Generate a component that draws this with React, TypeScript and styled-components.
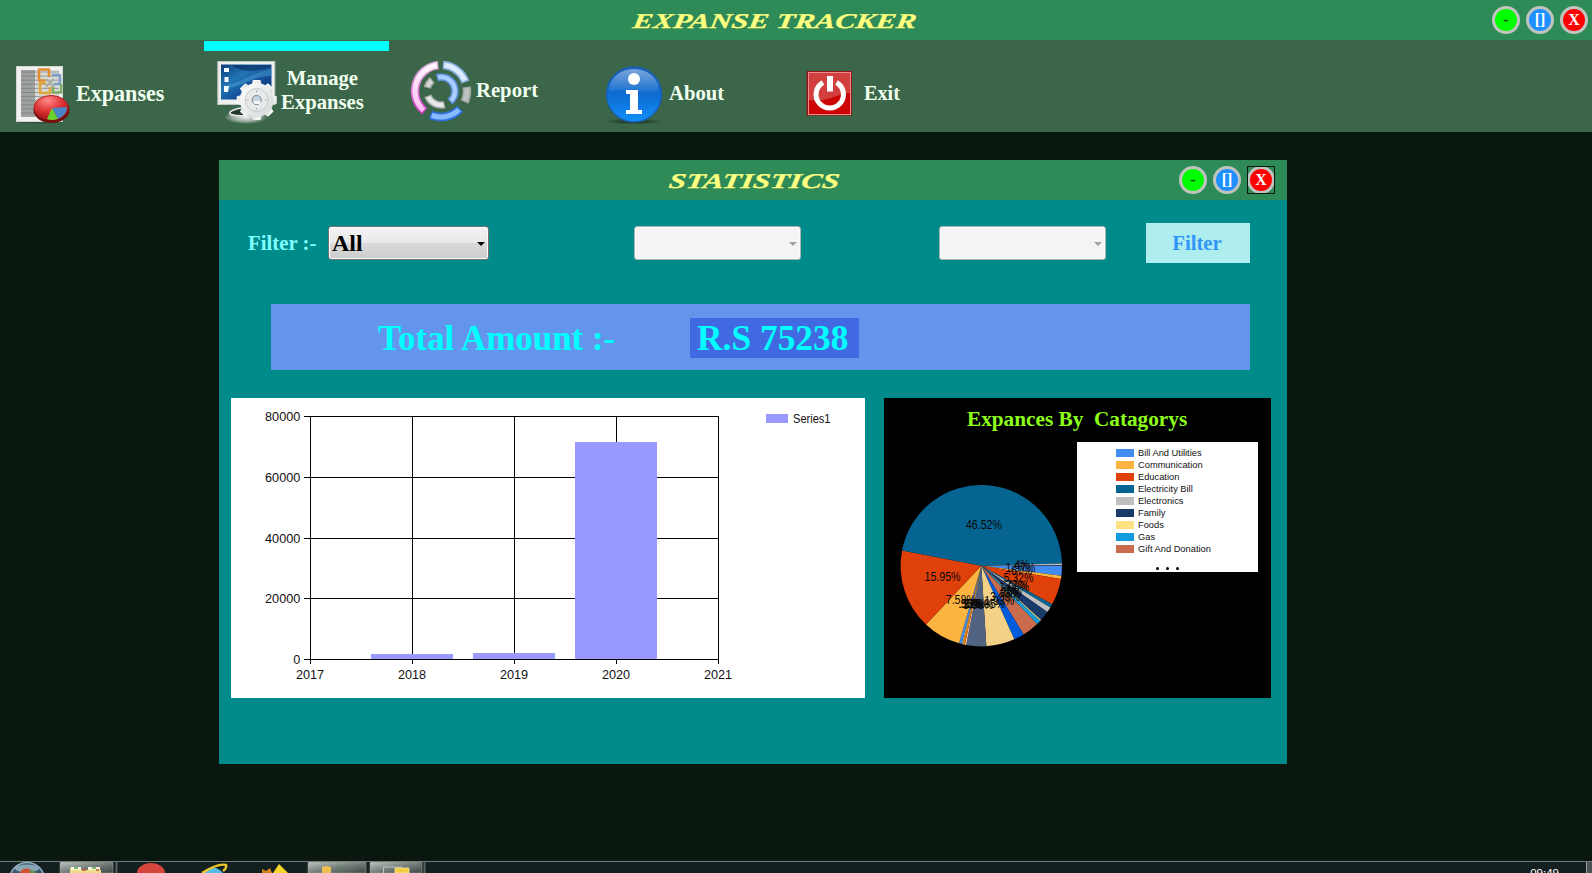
import React from 'react';
import styled, { createGlobalStyle } from 'styled-components';

const GlobalStyle = createGlobalStyle`
  * { box-sizing: border-box; }
  body { margin: 0; background: #08160f; font-family: "Liberation Serif", "Times New Roman", serif; }
`;

const Screen = styled.div`
  display: flex;
  flex-direction: column;
  width: 1592px;
  height: 873px;
  overflow: hidden;
  background: #0a170f;
`;

const TitleBar = styled.header<{ $inset: number }>`
  display: grid;
  grid-template-columns: 1fr auto;
  align-items: center;
  flex: none;
  height: 40px;
  padding-right: ${(p) => p.$inset}px;
  background: #2e8b57;
`;

const Title = styled.h1<{ $left: number; $stretch: number }>`
  margin: 2px 0 0;
  padding-left: ${(p) => p.$left}px;
  font-size: 21px;
  line-height: 38px;
  font-weight: bold;
  font-style: italic;
  white-space: nowrap;
  color: #ffff80;
  span {
    display: inline-block;
    transform: scaleX(${(p) => p.$stretch}) skewX(-6deg);
    transform-origin: left center;
    -webkit-text-stroke: 0.25px #ffff80;
  }
`;

const Controls = styled.div`
  display: flex;
  gap: 6px;
`;

const ControlFrame = styled.div<{ $focused?: boolean }>`
  width: 28px;
  height: 28px;
  outline: ${(p) => (p.$focused ? '1px solid #0b1a10' : 'none')};
  outline-offset: -1px;
`;

const Control = styled.button<{ $fill: string; $ink: string }>`
  display: block;
  width: 28px;
  height: 28px;
  padding: 0 0 1px;
  border: 3px solid #c0c4c0;
  border-radius: 50%;
  background: ${(p) => p.$fill};
  color: ${(p) => p.$ink};
  font: bold 16px/18px "Liberation Serif", serif;
`;

const Nav = styled.nav`
  display: grid;
  grid-template-columns: 204px 194px 194px 204px 1fr;
  flex: none;
  height: 92px;
  background: #3c6649;
`;

const NavItem = styled.a<{ $indent: number; $active?: boolean }>`
  display: flex;
  align-items: flex-start;
  padding: 9px 0 0 ${(p) => p.$indent}px;
  margin-top: 1px;
  border-top: 10px solid transparent;
  border-image: ${(p) =>
    p.$active ? 'linear-gradient(90deg, #00ffff 185px, transparent 185px) 10 0 0 0' : 'none'};
  svg { flex: none; }
`;

const NavLabel = styled.span<{ $top: number; $gap: number; $size: number }>`
  margin: ${(p) => p.$top}px 0 0 ${(p) => p.$gap}px;
  font-size: ${(p) => p.$size}px;
  line-height: 24px;
  font-weight: bold;
  text-align: center;
  white-space: pre;
  color: #f0fff0;
`;

const Desktop = styled.main`
  flex: 1;
  padding: 28px 0 0 219px;
`;

const Window = styled.section`
  width: 1068px;
  height: 604px;
  background: #008b8b;
`;

const FilterRow = styled.div`
  display: flex;
  align-items: center;
  height: 40px;
  margin-top: 23px;
  padding-left: 29px;
`;

const FilterLabel = styled.label`
  width: 80px;
  font-size: 20.8px;
  font-weight: bold;
  color: #7fffff;
`;

const Combo = styled.div<{ $width: number; $gap: number; $disabled?: boolean }>`
  display: flex;
  align-items: center;
  justify-content: space-between;
  width: ${(p) => p.$width}px;
  height: 34px;
  margin-right: ${(p) => p.$gap}px;
  padding: 0 3px 0 3px;
  border: 1px solid ${(p) => (p.$disabled ? '#a9b5b5' : '#6f7575')};
  border-radius: 3px;
  background: ${(p) =>
    p.$disabled ? '#f4f4f4' : 'linear-gradient(#f3f3f3 0%, #e9e9e9 48%, #dadada 50%, #cdcdcd 100%)'};
  box-shadow: inset 0 0 0 1px #fafafa;
  color: ${(p) => (p.$disabled ? '#a0a0a0' : '#000')};
  font-size: 24px;
  line-height: 32px;
  font-weight: bold;
  &::after {
    content: '';
    margin: 2px 0 0 auto;
    border: 4px solid transparent;
    border-top-color: currentColor;
    border-bottom: 0;
  }
`;

const FilterButton = styled.button`
  width: 104px;
  height: 40px;
  padding: 0 2px 0 0;
  border: 0;
  background: #afeeee;
  color: #3296f8;
  font: bold 20.8px/40px "Liberation Serif", serif;
`;

const TotalBar = styled.div`
  display: flex;
  align-items: center;
  width: 979px;
  height: 66px;
  margin: 41px 0 28px 52px;
  padding: 2px 0 0 107px;
  background: #6495ed;
  color: #00ffff;
  font-size: 34.9px;
  font-weight: bold;
`;

const TotalLabel = styled.span`
  width: 312px;
  line-height: 40px;
  padding-top: 1px;
`;

const TotalValue = styled.strong`
  width: 169px;
  height: 40px;
  padding-left: 7px;
  background: #4169e1;
  font-size: 35.4px;
  line-height: 41px;
`;

const Panels = styled.div`
  display: flex;
  gap: 19px;
  padding-left: 12px;
`;

const ChartPanel = styled.div`
  width: 634px;
  height: 300px;
  background: #fff;
`;

const PiePanel = styled.div`
  display: grid;
  grid-template: 44px 256px / 193px 181px;
  width: 387px;
  height: 300px;
  background: #000;
`;

const PieTitle = styled.h2`
  grid-column: 1 / -1;
  margin: 0;
  padding-left: 83px;
  font-size: 21.25px;
  line-height: 42px;
  white-space: pre;
  color: #8cff1a;
`;

const Legend = styled.ul`
  display: flex;
  flex-direction: column;
  height: 130px;
  margin: 0;
  padding: 5px 0 0 39px;
  background: #fff;
  list-style: none;
  font: 9.3px/11px "Liberation Sans", Arial, sans-serif;
  color: #111;
`;

const LegendItem = styled.li<{ $color: string }>`
  display: flex;
  align-items: center;
  gap: 4px;
  height: 12px;
  &::before {
    content: '';
    width: 18px;
    height: 8px;
    background: ${(p) => p.$color};
  }
`;

const LegendMore = styled.li`
  display: flex;
  gap: 7px;
  margin: 12px 0 0 40px;
  i {
    width: 3px;
    height: 3px;
    border-radius: 50%;
    background: #000;
  }
`;

const Taskbar = styled.footer`
  display: flex;
  align-items: flex-start;
  flex: none;
  height: 12px;
  border-top: 1px solid #737d7b;
  background: #14201f;
`;

const Clock = styled.time`
  margin: 4px 27px 0 auto;
  font: 11.5px/14px "Liberation Sans", Arial, sans-serif;
  color: #fff;
`;

const ShowDesktop = styled.div`
  width: 6px;
  height: 12px;
  border-left: 1px solid #9aa3a1;
  background: #4b5453;
`;

function WindowControls({ closeFocused }: { closeFocused?: boolean }) {
  return (
    <Controls>
      <ControlFrame><Control $fill="#00ff00" $ink="#044a04">-</Control></ControlFrame>
      <ControlFrame><Control $fill="#1e90ff" $ink="#fff">[]</Control></ControlFrame>
      <ControlFrame $focused={closeFocused}><Control $fill="#ff0000" $ink="#fff">X</Control></ControlFrame>
    </Controls>
  );
}

function SheetIcon() {
  const rows = Array.from({ length: 11 }, (_, i) => 12 + i * 4.1);
  return (
    <svg width="64" height="64" viewBox="0 0 64 64">
      <defs>
        <radialGradient id="sheetPie" cx=".4" cy=".2" r=".8">
          <stop offset="0" stopColor="#ff8a8a" /><stop offset=".5" stopColor="#e23b3b" /><stop offset="1" stopColor="#a81313" />
        </radialGradient>
      </defs>
      <ellipse cx="32" cy="61" rx="25" ry="2.500" fill="#20402c" opacity=".5" />
      <rect x="8.5" y="6.500" width="46" height="55" fill="#f1f1ef" stroke="#d5d5d3" />
      <rect x="13" y="10" width="14" height="47" fill="#9fa19f" />
      <rect x="27" y="10" width="24" height="47" fill="#d9dad8" />
      {rows.map((y) => <path key={y} d={`M13 ${y}H51`} stroke="#777b78" strokeWidth="1" opacity=".65" />)}
      <g fill="none" strokeWidth="2.600" strokeLinejoin="round">
        <path d="M41 17V9.500H31v11h6" stroke="#e28d31" />
        <path d="M44 15h8v9h-6" stroke="#7c9fc8" />
        <path d="M38 23h-6v10h10v-6" stroke="#e0a83a" />
        <path d="M45 26v6.500h8V24" stroke="#7fab62" />
        <path d="M38 19l8 8M46 19l-8 8" stroke="#a9aba4" strokeWidth="1.800" />
      </g>
      <ellipse cx="43.500" cy="50" rx="18" ry="13" fill="#741010" />
      <ellipse cx="43" cy="47.500" rx="17" ry="12" fill="url(#sheetPie)" stroke="#b51e1e" />
      <path d="M44 48l15-1q0 8-9 12z" fill="#4784ca" />
      <path d="M44 48l6 11q-6 2-11 0z" fill="#68d22c" />
    </svg>
  );
}

function ManageIcon() {
  const teeth = [0, 45, 90, 135, 180, 225, 270, 315];
  return (
    <svg width="64" height="64" viewBox="0 0 64 64">
      <defs>
        <linearGradient id="screen" x1="0" y1="0" x2="1" y2="1">
          <stop offset="0" stopColor="#0e3c77" /><stop offset=".35" stopColor="#2375b4" />
          <stop offset=".6" stopColor="#14509a" /><stop offset="1" stopColor="#0b2f6e" />
        </linearGradient>
        <linearGradient id="gear" x1="0" y1="0" x2="1" y2="1">
          <stop offset="0" stopColor="#fff" /><stop offset="1" stopColor="#d3d6d7" />
        </linearGradient>
        <radialGradient id="stand">
          <stop offset="0" stopColor="#f2f4f3" /><stop offset=".6" stopColor="#c8d0cb" stopOpacity=".7" />
          <stop offset="1" stopColor="#c8d0cb" stopOpacity="0" />
        </radialGradient>
      </defs>
      <ellipse cx="32" cy="57" rx="22" ry="7" fill="url(#stand)" />
      <path d="M30 48c-9 0-16 4-14 6 3 2 12 2 18 2" fill="#22382c" stroke="#e6e8e8" strokeWidth="1.600" />
      <rect x="3.800" y="1.500" width="57" height="43" fill="#eef0f0" stroke="#bfc4c4" />
      <rect x="7" y="4.500" width="50.500" height="35" fill="url(#screen)" />
      <path d="M14 25c14-3 24-12 43.500-16v7C39 16 29 26 14 28z" fill="#53b1da" opacity=".4" />
      <path d="M18 5c10 9 26 6 39 2V5z" fill="#092c60" opacity=".65" />
      <path d="M10 8h5v4h-5zM10.500 17h4v5h-4zM10 26h5l-1 6h-4z" fill="#f5fbff" />
      <g fill="url(#gear)">
        {teeth.map((a) => <path key={a} d="M37.500 26l1.400-6h7.600l1.400 6z" transform={`rotate(${a} 42.700 40)`} />)}
        <circle cx="42.700" cy="40" r="17" />
      </g>
      <circle cx="42.700" cy="40" r="11.500" fill="#e7e9ea" stroke="#c7cacc" />
      <circle cx="42.700" cy="40" r="4.600" fill="#c3d3e2" stroke="#81878b" strokeWidth="1" />
      <path d="M39 41h7.500v3h-6z" fill="#f6f8f8" />
      <path d="M42.700 30.500v1.500M42.700 48v1.500M33 40h1.500M51 40h1.500" stroke="#969b9e" />
    </svg>
  );
}

function ReportIcon() {
  const point = (r: number, a: number) =>
    `${32 + r * Math.cos((a * Math.PI) / 180)} ${31 + r * Math.sin((a * Math.PI) / 180)}`;
  const arcs: [number, number, number, string, string][] = [
    [26, 129, 264, 'url(#pinkEdge)', 'url(#pinkCore)'],
    [26, 274, 340, '#86addd', '#dceaff'],
    [26, 351, 385, '#a0a6a2', '#bcc0be'],
    [26, 43, 114, '#2f6fe0', '#86bbff'],
    [14, 253, 410, '#5c91dd', '#aacdff'],
    [14, 75, 160, '#a9aeab', '#e8eae9'],
    [14, 193, 232, '#a3aaa5', '#d5d8d6'],
  ];
  return (
    <svg width="64" height="64" viewBox="0 0 64 64" fill="none">
      <defs>
        <linearGradient id="pinkEdge" gradientUnits="userSpaceOnUse" x1="0" y1="2" x2="0" y2="56">
          <stop offset="0" stopColor="#dcb7dc" /><stop offset="1" stopColor="#d132c2" />
        </linearGradient>
        <linearGradient id="pinkCore" gradientUnits="userSpaceOnUse" x1="0" y1="2" x2="0" y2="56">
          <stop offset="0" stopColor="#fffaff" /><stop offset="1" stopColor="#ffb6f3" />
        </linearGradient>
      </defs>
      {arcs.map(([r, a, b, edge, core]) => {
        const trim = r > 20 ? 3 : 5;
        return (
          <g key={`${r}-${a}`}>
            <path d={`M${point(r, a)}A${r} ${r} 0 0 1 ${point(r, b)}`} stroke={edge} strokeWidth={r > 20 ? 8.5 : 7.5} />
            <path d={`M${point(r, a + trim)}A${r} ${r} 0 0 1 ${point(r, b - trim)}`} stroke={core} strokeWidth={r > 20 ? 5.2 : 4.4} />
          </g>
        );
      })}
    </svg>
  );
}

function AboutIcon() {
  return (
    <svg width="64" height="64" viewBox="0 0 64 64">
      <defs>
        <linearGradient id="info" x1="0" y1="0" x2="0" y2="1">
          <stop offset="0" stopColor="#1c64be" /><stop offset=".5" stopColor="#0d6cd2" /><stop offset="1" stopColor="#1290fa" />
        </linearGradient>
        <linearGradient id="infoShine" x1="0" y1="0" x2="0" y2="1">
          <stop offset="0" stopColor="#fff" stopOpacity=".42" /><stop offset="1" stopColor="#fff" stopOpacity=".04" />
        </linearGradient>
        <radialGradient id="infoShadow">
          <stop offset="0" stopColor="#0f2016" stopOpacity=".9" /><stop offset="1" stopColor="#0f2016" stopOpacity="0" />
        </radialGradient>
      </defs>
      <ellipse cx="32" cy="61.500" rx="30" ry="3" fill="url(#infoShadow)" />
      <circle cx="32" cy="34.500" r="27.500" fill="url(#info)" stroke="#1a5fae" strokeWidth="1.500" />
      <path d="M7 31C8 2 56 2 57 31 42 35 27 28 7 31z" fill="url(#infoShine)" />
      <circle cx="32" cy="19" r="6" fill="#fff" />
      <path d="M24 30h12v20h4v4H24v-4h4V34h-4z" fill="#fff" />
    </svg>
  );
}

function ExitIcon() {
  return (
    <svg width="64" height="64" viewBox="0 0 64 64">
      <rect x="9.500" y="11" width="45.500" height="44.500" fill="#8d1717" />
      <rect x="11.500" y="12.500" width="42" height="42" fill="#cc0404" stroke="#f08c8c" />
      <path d="M12 13h41v20C38 34 31 43 12 40z" fill="#d24a4a" opacity=".85" />
      <path d="M26 22.500a13.700 13.700 0 1 0 13.500 0" fill="none" stroke="#fff" strokeWidth="5" />
      <path d="M33 16v15.500" stroke="#fff" strokeWidth="6" />
    </svg>
  );
}

const AXIS_FONT = '"Liberation Sans", Arial, sans-serif';

function BarChart() {
  const ys = [18.5, 79.5, 140.5, 200.5, 261.5];
  const xs = [79.5, 181.5, 283.5, 385.5, 487.5];
  const bars = [
    { x: 140, top: 256, w: 82 },
    { x: 242, top: 255, w: 82 },
    { x: 344, top: 44, w: 82 },
  ];
  return (
    <svg width="634" height="300" fontFamily={AXIS_FONT} fontSize="13.3" fill="#111">
      <g stroke="#000" shapeRendering="crispEdges">
        {ys.map((y) => <path key={y} d={`M73 ${y}H488`} />)}
        {xs.map((x) => <path key={x} d={`M${x} 18V266`} />)}
      </g>
      {bars.map((b) => <rect key={b.x} x={b.x} y={b.top} width={b.w} height={261 - b.top} fill="#9999ff" />)}
      {ys.map((y, i) => {
        const value = String(80000 - i * 20000);
        return (
          <text key={y} x="69.300" y={y + 4.5} textAnchor="end" textLength={value.length * 7.05} lengthAdjust="spacingAndGlyphs">
            {value}
          </text>
        );
      })}
      {xs.map((x, i) => (
        <text key={x} x={x - 0.5} y="281" textAnchor="middle" textLength="28.200" lengthAdjust="spacingAndGlyphs">
          {2017 + i}
        </text>
      ))}
      <rect x="535" y="16" width="22" height="9" fill="#9999ff" />
      <text x="562" y="25" fontSize="12.300" textLength="37.500" lengthAdjust="spacingAndGlyphs">Series1</text>
    </svg>
  );
}

const slices: [number, string, string][] = [
  [7.1, '#418cf0', '1.97%'],
  [9.5, '#fcb441', '.67%'],
  [28.6, '#e0400a', '5.32%'],
  [31.2, '#056492', '.72%'],
  [35.1, '#bfbfbf', '1.08%'],
  [42.3, '#1a3b69', '2%'],
  [43.2, '#ffe382', '.25%'],
  [46.2, '#129cdd', '.83%'],
  [58.4, '#ca6b4b', '3.39%'],
  [65.9, '#005cdb', '1.93%'],
  [86.4, '#f3d288', '5.85%'],
  [100.7, '#506381', '3.98%'],
  [101.8, '#f1b9a8', '.31%'],
  [103.6, '#e0830a', '.5%'],
  [104.1, '#c9d5e0', '.13%'],
  [106, '#418cf0', '.53%'],
  [133.3, '#fcb441', '7.58%'],
  [190.9, '#e0400a', '15.95%'],
  [358.5, '#056492', '46.52%'],
  [359.7, '#bfbfbf', '.4%'],
  [360, '#1a3b69', ''],
];

function PieChart() {
  const cx = 97.3;
  const cy = 123.7;
  const r = 80.7;
  const at = (deg: number, dist: number) => [
    cx + dist * Math.cos((deg * Math.PI) / 180),
    cy + dist * Math.sin((deg * Math.PI) / 180),
  ];
  const parts = slices.map(([end, color, label], i) => {
    const start = i === 0 ? 0 : slices[i - 1][0];
    return { start, end, color, label, mid: (start + end) / 2 };
  });
  return (
    <svg width="193" height="256" fontFamily={AXIS_FONT} fontSize="12">
      {parts.map((p) => (
        <path
          key={p.end}
          d={`M${cx} ${cy}L${at(p.start, r).join(' ')}A${r} ${r} 0 0 1 ${at(p.end, r).join(' ')}Z`}
          fill={p.color}
        />
      ))}
      {parts.filter((p) => p.label).map((p) => {
        const [x, y] = at(p.mid, 40);
        return (
          <text
            key={p.end}
            x={x - 0.7}
            y={y + 3.5}
            textAnchor="middle"
            textLength={p.label.length * 6}
            lengthAdjust="spacingAndGlyphs"
            fill="#080808"
          >
            {p.label}
          </text>
        );
      })}
    </svg>
  );
}

const legend: [string, string][] = [
  ['Bill And Utilities', '#418cf0'],
  ['Communication', '#fcb441'],
  ['Education', '#e0400a'],
  ['Electricity Bill', '#056492'],
  ['Electronics', '#bfbfbf'],
  ['Family', '#1a3b69'],
  ['Foods', '#ffe382'],
  ['Gas', '#129cdd'],
  ['Gift And Donation', '#ca6b4b'],
];

function TaskbarIcons() {
  return (
    <svg width="440" height="11" viewBox="0 0 440 11">
      <defs>
        <linearGradient id="task" x1="0" y1="0" x2="1" y2="1">
          <stop offset="0" stopColor="#bfc4c2" /><stop offset=".45" stopColor="#7d8583" /><stop offset="1" stopColor="#3b4544" />
        </linearGradient>
      </defs>
      <circle cx="27" cy="18" r="17.500" fill="#38576c" stroke="#8fb0c4" strokeWidth="1.500" />
      <ellipse cx="27" cy="6.500" rx="12" ry="4" fill="#8aa5b5" />
      <path d="M20 11q2-6 10-4v4z" fill="#d0532e" />
      <path d="M30 8q4 0 6 3h-6z" fill="#5c9551" />
      <path d="M60 11V1q0-1 1-1h51q1 0 1 1v10z" fill="url(#task)" stroke="#939b99" strokeWidth=".6" />
      <path d="M308 11V1q0-1 1-1h56q1 0 1 1v10z" fill="url(#task)" stroke="#939b99" strokeWidth=".6" />
      <path d="M370 11V1q0-1 1-1h50q1 0 1 1v10z" fill="url(#task)" stroke="#939b99" strokeWidth=".6" />
      <path d="M116.500 0v11M424.500 0v11" stroke="#5a6462" strokeWidth="2" />
      <path d="M70 6h7l2 2h22v3H70z" fill="#efdc88" />
      <path d="M71 5h10v3H71zM88 5h12v3H88z" fill="#f8f5db" />
      <path d="M74 6h4M92 6h4" stroke="#52a342" strokeWidth="1.500" />
      <path d="M82 8h4M96 8h3" stroke="#d04f33" strokeWidth="1.500" />
      <path d="M137 11a14 10 0 0 1 28 0z" fill="#d6453b" />
      <path d="M203 11q10-11 20 0z" fill="#58bce8" />
      <path d="M202 11q16-10 24-8 1 3-3 6" fill="none" stroke="#f0c727" strokeWidth="2.400" />
      <path d="M262 11v-4l4 2 4-3 2 5z" fill="#d98219" />
      <path d="M273 11l6-9 9 9z" fill="#f5d52d" />
      <path d="M322 11V5q5-2 9 0v6z" fill="#ecc152" />
      <path d="M336 5h12M336 8h12" stroke="#3f8843" strokeDasharray="1 2" />
      <path d="M383.500 11V5H402" fill="none" stroke="#bdc3bd" />
      <path d="M395 6h14v5h-14z" fill="#f1cd3f" stroke="#fff0a0" strokeWidth=".7" />
    </svg>
  );
}

export default function App() {
  return (
    <Screen>
      <GlobalStyle />
      <TitleBar $inset={4}>
        <Title $left={633} $stretch={1.445}><span>EXPANSE TRACKER</span></Title>
        <WindowControls />
      </TitleBar>
      <Nav>
        <NavItem $indent={8}>
          <SheetIcon />
          <NavLabel $top={22} $gap={4} $size={22.1}>Expanses</NavLabel>
        </NavItem>
        <NavItem $indent={10} $active>
          <ManageIcon />
          <NavLabel $top={6} $gap={3} $size={20.7}>{'Manage\nExpanses'}</NavLabel>
        </NavItem>
        <NavItem $indent={11}>
          <ReportIcon />
          <NavLabel $top={18} $gap={3} $size={20.7}>Report</NavLabel>
        </NavItem>
        <NavItem $indent={10}>
          <AboutIcon />
          <NavLabel $top={21} $gap={3} $size={20.7}>About</NavLabel>
        </NavItem>
        <NavItem $indent={1}>
          <ExitIcon />
          <NavLabel $top={21} $gap={3} $size={20.2}>Exit</NavLabel>
        </NavItem>
      </Nav>
      <Desktop>
        <Window>
          <TitleBar $inset={12}>
            <Title $left={450} $stretch={1.475}><span>STATISTICS</span></Title>
            <WindowControls closeFocused />
          </TitleBar>
          <FilterRow>
            <FilterLabel>Filter :-</FilterLabel>
            <Combo $width={161} $gap={145}>All</Combo>
            <Combo $width={167} $gap={138} $disabled />
            <Combo $width={167} $gap={40} $disabled />
            <FilterButton>Filter</FilterButton>
          </FilterRow>
          <TotalBar>
            <TotalLabel>Total Amount :-</TotalLabel>
            <TotalValue>R.S 75238</TotalValue>
          </TotalBar>
          <Panels>
            <ChartPanel><BarChart /></ChartPanel>
            <PiePanel>
              <PieTitle>{'Expances By  Catagorys'}</PieTitle>
              <PieChart />
              <Legend>
                {legend.map(([name, color]) => (
                  <LegendItem key={name} $color={color}>{name}</LegendItem>
                ))}
                <LegendMore><i /><i /><i /></LegendMore>
              </Legend>
            </PiePanel>
          </Panels>
        </Window>
      </Desktop>
      <Taskbar>
        <TaskbarIcons />
        <Clock>09:49</Clock>
        <ShowDesktop />
      </Taskbar>
    </Screen>
  );
}
